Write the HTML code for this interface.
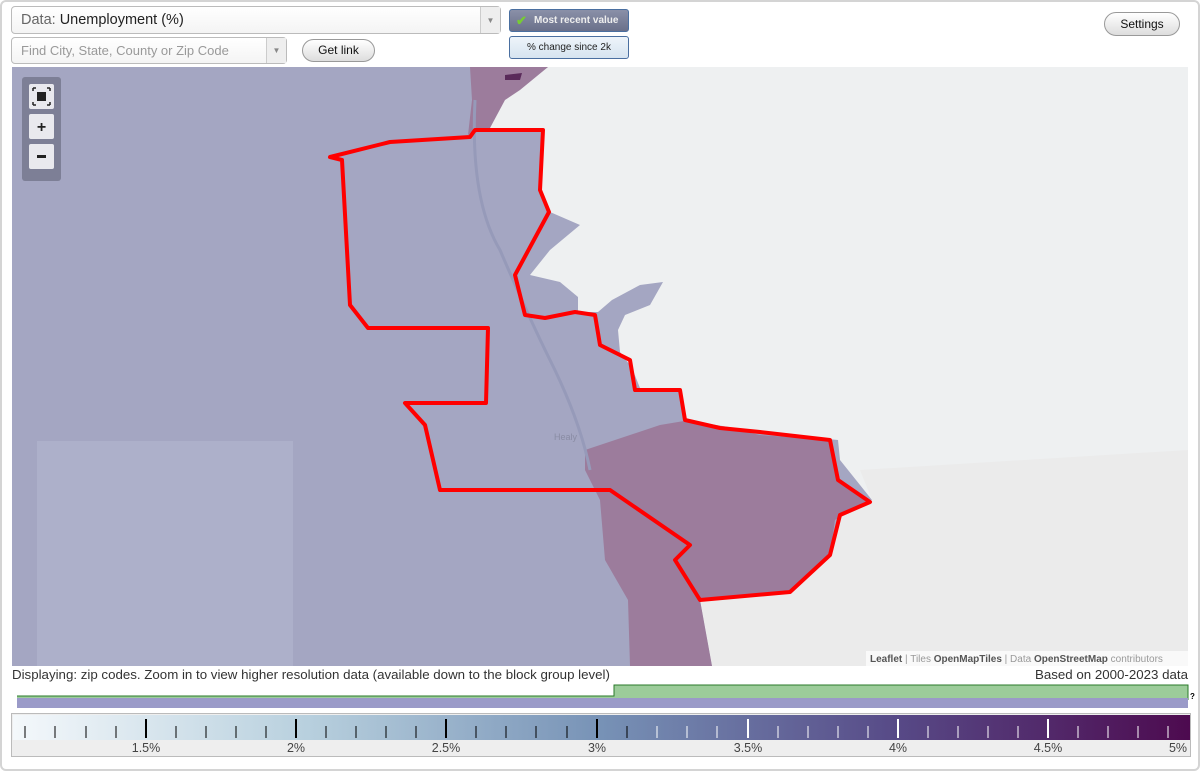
<!DOCTYPE html>
<html><head><meta charset="utf-8"><style>
*{margin:0;padding:0;box-sizing:border-box}
body{width:1200px;height:771px;background:#fff;font-family:"Liberation Sans",sans-serif;position:relative;overflow:hidden}
.frame{position:absolute;left:0;top:0;width:1200px;height:771px;border:2px solid #d4d4d4;border-radius:6px}
.sel{position:absolute;border:1px solid #bbb;border-radius:4px;background:linear-gradient(#fff,#f4f4f4)}
.arr{position:absolute;right:0;top:0;bottom:0;width:20px;border-left:1px solid #ccc;background:#eee;color:#888;font-size:8px;text-align:center}
.btn{position:absolute;border:1px solid #999;border-radius:12px;background:linear-gradient(#fff,#ddd);font-size:12px;text-align:center;color:#111}
</style></head><body>
<div class="frame"></div>
<div class="sel" style="left:11px;top:6px;width:490px;height:28px"><span style="position:absolute;left:9px;top:5px;font-size:14.5px;color:#666">Data: <span style="color:#222">Unemployment (%)</span></span><div class="arr" style="line-height:27px">▼</div></div>
<div class="sel" style="left:11px;top:37px;width:276px;height:27px"><span style="position:absolute;left:9px;top:5px;font-size:13px;color:#999">Find City, State, County or Zip Code</span><div class="arr" style="line-height:26px">▼</div></div>
<div class="btn" style="left:302px;top:39px;width:73px;height:23px;line-height:21px">Get link</div>
<div style="position:absolute;left:509px;top:9px;width:120px;height:23px;border:1px solid #4a6fa0;border-radius:3px;background:linear-gradient(#8a90a8,#6a708a);color:#eee;font-size:10px;font-weight:bold;line-height:21px;padding-left:24px">Most recent value<span style="position:absolute;left:6px;top:0;color:#7c3;font-size:13px">✔</span></div>
<div style="position:absolute;left:509px;top:36px;width:120px;height:23px;border:1px solid #4a6fa0;border-radius:3px;background:linear-gradient(#eef4fa,#d6e4f0);color:#222;font-size:10px;line-height:21px;text-align:center">% change since 2k</div>
<div class="btn" style="left:1104px;top:12px;width:76px;height:24px;line-height:22px">Settings</div>
<svg style="position:absolute;left:12px;top:67px" width="1176" height="599" viewBox="12 67 1176 599">
<rect x="12" y="67" width="1176" height="599" fill="#a4a6c2"/>
<rect x="37" y="441" width="256" height="225" fill="#adb0ca"/>
<path d="M548,67 L1188,67 L1188,666 L712,666 L700,600 L790,592 L830,555 L840,515 L872,500 L860,485 L840,460 L838,440 L760,432 L685,420 L680,390 L640,388 L632,368 L620,352 L618,330 L625,315 L650,305 L663,282 L640,285 L612,300 L598,312 L578,312 L578,297 L560,282 L530,275 L550,250 L580,225 L550,212 L540,190 L543,130 L490,128 L480,105 L520,85 Z" fill="#eef0f1"/>
<path d="M860,470 L1188,450 L1188,666 L712,666 L700,600 L790,592 L830,555 L840,515 L872,500 Z" fill="#ebebeb"/>
<path d="M585,450 L660,425 L690,420 L760,435 L830,440 L840,480 L870,500 L835,520 L830,555 L790,590 L700,600 L712,666 L630,666 L628,600 L605,560 L600,500 L585,470 Z" fill="#9c7c9c"/>
<path d="M470,67 L548,67 L520,90 L505,100 L490,128 L468,135 L472,100 Z" fill="#9c7c9c"/>
<path d="M505,75 L522,73 L520,80 L505,80 Z" fill="#5a2a5a"/>
<path d="M475,100 Q470,200 500,250 Q530,320 550,360 Q580,420 590,470" fill="none" stroke="#969ab9" stroke-width="3"/>
<text x="554" y="440" font-size="9" fill="#8a8ca4" font-family="Liberation Sans">Healy</text>
<path d="M475,130 L543,130 L540,190 L549,212 L515,275 L525,315 L545,318 L575,312 L595,315 L600,345 L630,360 L635,390 L680,390 L685,420 L720,428 L760,432 L830,440 L838,480 L870,502 L840,515 L830,555 L790,592 L700,600 L675,560 L690,545 L610,490 L440,490 L425,425 L405,403 L486,403 L488,328 L368,328 L350,305 L342,160 L330,157 L390,142 L470,137 Z" fill="none" stroke="#ff0000" stroke-width="4" stroke-linejoin="round"/>
<rect x="22" y="77" width="39" height="104" rx="3" fill="#7d7f96"/>
<rect x="29" y="84" width="25" height="25" rx="2" fill="#e9e9ee"/><rect x="37" y="92" width="9" height="9" fill="#222"/>
<path d="M33,88 l3,0 M33,88 l0,3 M50,88 l-3,0 M50,88 l0,3 M33,105 l3,0 M33,105 l0,-3 M50,105 l-3,0 M50,105 l0,-3" stroke="#222" stroke-width="1.5"/>
<rect x="29" y="114" width="25" height="25" rx="2" fill="#e9e9ee"/><text x="41.5" y="132" font-size="16" font-weight="bold" text-anchor="middle" fill="#222">+</text>
<rect x="29" y="144" width="25" height="25" rx="2" fill="#e9e9ee"/><rect x="37" y="155" width="9" height="3" fill="#222"/>
<rect x="866" y="651" width="322" height="15" fill="rgba(255,255,255,0.7)"/>
<text x="870" y="662" font-size="10" fill="#999"><tspan fill="#555" font-weight="bold">Leaflet</tspan> | Tiles <tspan fill="#555" font-weight="bold">OpenMapTiles</tspan> | Data <tspan fill="#555" font-weight="bold">OpenStreetMap</tspan> contributors</text>
</svg>
<div style="position:absolute;left:12px;top:667px;font-size:13.3px;color:#333">Displaying: zip codes. Zoom in to view higher resolution data (available down to the block group level)</div>
<div style="position:absolute;right:12px;top:667px;font-size:13.3px;color:#333">Based on 2000-2023 data</div>
<svg style="position:absolute;left:0;top:680px" width="1200" height="91">
<path d="M17,16 L614,16 L614,5 L1188,5 L1188,20 L17,20 Z" fill="#9ccc9a"/>
<path d="M17,16 L614,16 L614,5 L1188,5 L1188,20" fill="none" stroke="#2a7a2a" stroke-width="1"/>
<rect x="17" y="18" width="1171" height="10" fill="#9a9ac8"/>
<text x="1190" y="19" font-size="8" font-weight="bold">?</text>
<rect x="11.5" y="33.5" width="1179" height="43" fill="#eee" stroke="#bbb"/>
<defs><linearGradient id="g" x1="0" x2="1"><stop offset="0" stop-color="#f4f8fb"/><stop offset="0.25" stop-color="#b8d0de"/><stop offset="0.5" stop-color="#7792b6"/><stop offset="0.75" stop-color="#574a87"/><stop offset="1" stop-color="#4d0a4f"/></linearGradient></defs>
<rect x="13" y="35" width="1177" height="25" fill="url(#g)"/>
<g font-size="12.5" fill="#444" text-anchor="middle"><text x="146" y="72">1.5%</text><text x="296" y="72">2%</text><text x="446" y="72">2.5%</text><text x="597" y="72">3%</text><text x="748" y="72">3.5%</text><text x="898" y="72">4%</text><text x="1048" y="72">4.5%</text><text x="1178" y="72">5%</text></g>
<g stroke-width="1">
<line x1="25" y1="46" x2="25" y2="58" stroke="#000"/><line x1="55" y1="46" x2="55" y2="58" stroke="#000"/><line x1="86" y1="46" x2="86" y2="58" stroke="#000"/><line x1="116" y1="46" x2="116" y2="58" stroke="#000"/>
<line x1="146" y1="39" x2="146" y2="58" stroke="#000" stroke-width="2"/>
<line x1="176" y1="46" x2="176" y2="58" stroke="#000"/><line x1="206" y1="46" x2="206" y2="58" stroke="#000"/><line x1="236" y1="46" x2="236" y2="58" stroke="#000"/><line x1="266" y1="46" x2="266" y2="58" stroke="#000"/>
<line x1="296" y1="39" x2="296" y2="58" stroke="#000" stroke-width="2"/>
<line x1="326" y1="46" x2="326" y2="58" stroke="#000"/><line x1="356" y1="46" x2="356" y2="58" stroke="#000"/><line x1="386" y1="46" x2="386" y2="58" stroke="#000"/><line x1="416" y1="46" x2="416" y2="58" stroke="#000"/>
<line x1="446" y1="39" x2="446" y2="58" stroke="#000" stroke-width="2"/>
<line x1="476" y1="46" x2="476" y2="58" stroke="#000"/><line x1="506" y1="46" x2="506" y2="58" stroke="#000"/><line x1="536" y1="46" x2="536" y2="58" stroke="#000"/><line x1="567" y1="46" x2="567" y2="58" stroke="#000"/>
<line x1="597" y1="39" x2="597" y2="58" stroke="#000" stroke-width="2"/>
<line x1="627" y1="46" x2="627" y2="58" stroke="#000"/><line x1="657" y1="46" x2="657" y2="58" stroke="#fff"/><line x1="687" y1="46" x2="687" y2="58" stroke="#fff"/><line x1="717" y1="46" x2="717" y2="58" stroke="#fff"/>
<line x1="748" y1="39" x2="748" y2="58" stroke="#fff" stroke-width="2"/>
<line x1="778" y1="46" x2="778" y2="58" stroke="#fff"/><line x1="808" y1="46" x2="808" y2="58" stroke="#fff"/><line x1="838" y1="46" x2="838" y2="58" stroke="#fff"/><line x1="868" y1="46" x2="868" y2="58" stroke="#fff"/>
<line x1="898" y1="39" x2="898" y2="58" stroke="#fff" stroke-width="2"/>
<line x1="928" y1="46" x2="928" y2="58" stroke="#fff"/><line x1="958" y1="46" x2="958" y2="58" stroke="#fff"/><line x1="988" y1="46" x2="988" y2="58" stroke="#fff"/><line x1="1018" y1="46" x2="1018" y2="58" stroke="#fff"/>
<line x1="1048" y1="39" x2="1048" y2="58" stroke="#fff" stroke-width="2"/>
<line x1="1078" y1="46" x2="1078" y2="58" stroke="#fff"/><line x1="1108" y1="46" x2="1108" y2="58" stroke="#fff"/><line x1="1138" y1="46" x2="1138" y2="58" stroke="#fff"/><line x1="1168" y1="46" x2="1168" y2="58" stroke="#fff"/>
</g>
</svg>
</body></html>
